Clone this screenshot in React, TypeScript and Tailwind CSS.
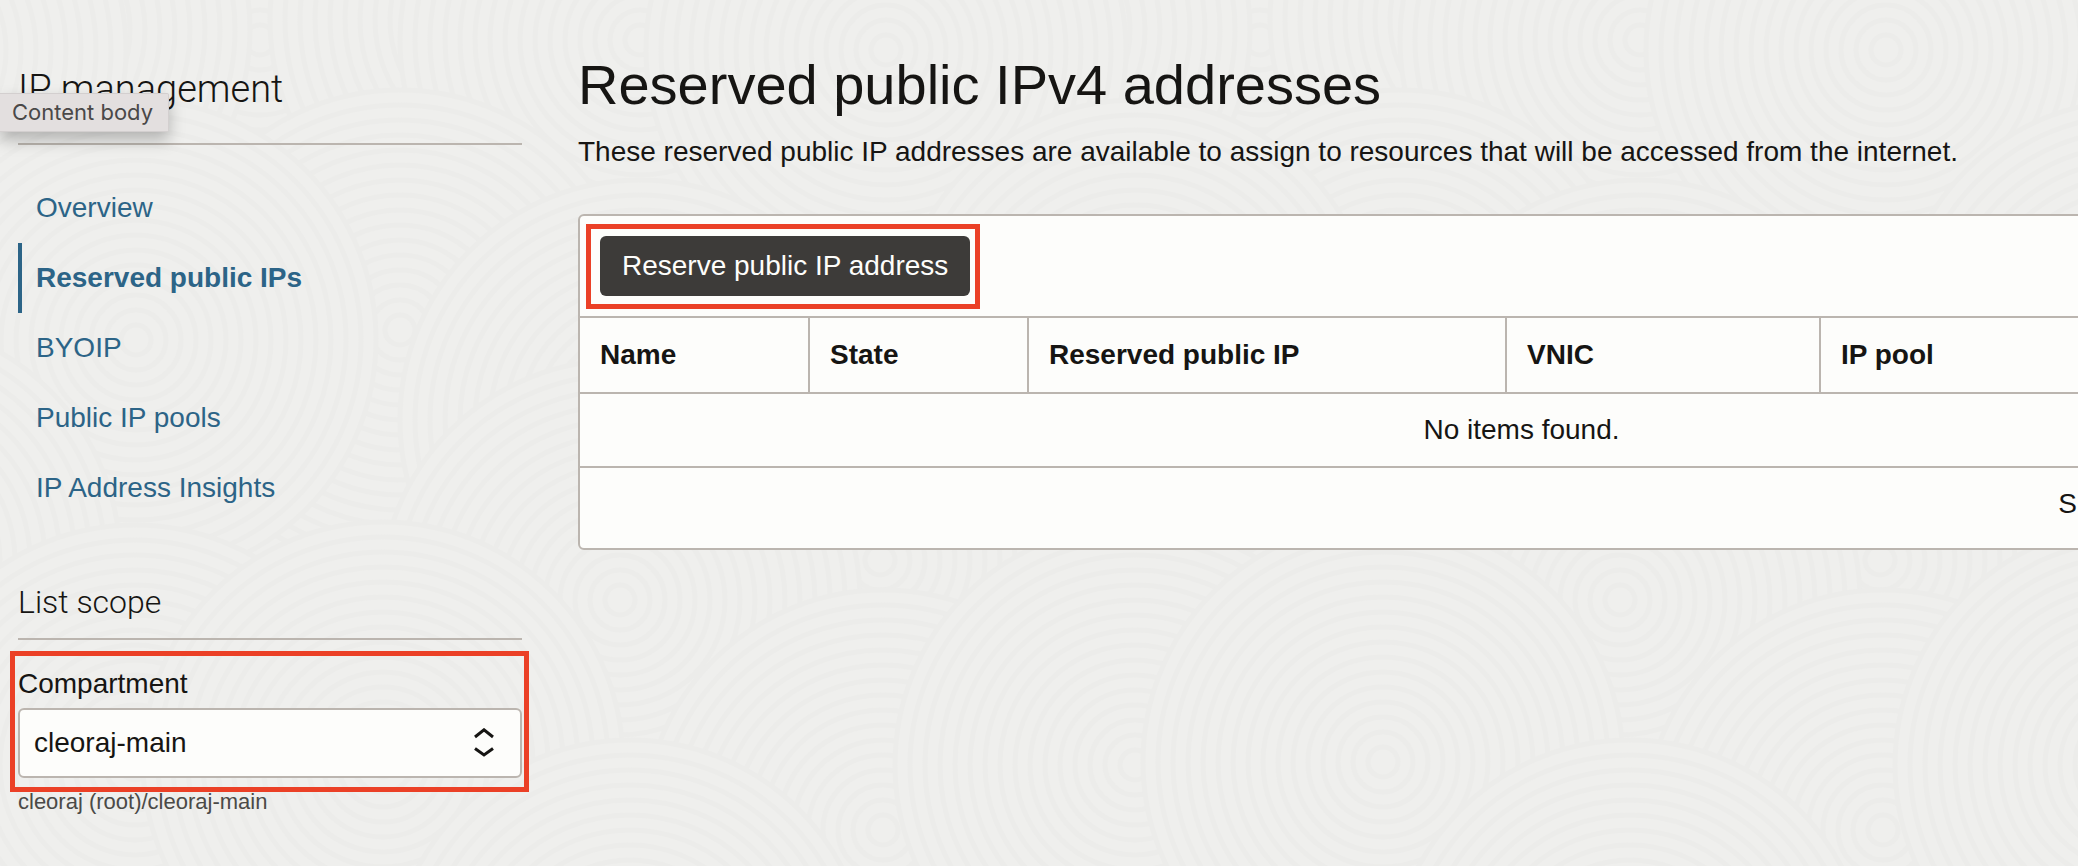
const navLinks = ["Overview", "Reserved public IPs", "BYOIP", "Public IP pools", "IP Address Insights"];
const activeLink = "Reserved public IPs";

const columns = [
  { title: "Name", width: "w-[230px]" },
  { title: "State", width: "w-[219px]" },
  { title: "Reserved public IP", width: "w-[478px]" },
  { title: "VNIC", width: "w-[314px]" },
  { title: "IP pool", width: "" },
];

// Ring centres of one 1000px wide tile, listed from back to front.
const ringCentres = [
  [260, 40], [510, 20], [10, 30], [760, 180], [640, 40], [886, 50], [400, 330], [136, 340],
  [640, 420], [880, 560], [620, 600], [883, 830], [135, 765], [383, 762], [630, 980],
];
const tileOffsets = [-1000, 0, 1000, 2000];
const radii = [240, 225, 210, 195, 180, 165, 150, 135, 120, 105, 90, 75, 60, 45, 30, 15];

function RippleBackground() {
  return (
    <svg className="pointer-events-none absolute inset-0 h-full w-full" aria-hidden="true">
      {ringCentres.map(([x, y]) =>
        tileOffsets.map((dx) => (
          <g key={`${x}-${y}-${dx}`} fill="#efefed" stroke="#ececea" strokeWidth="5">
            {radii.map((r) => (
              <circle key={r} cx={x + dx} cy={y} r={r} />
            ))}
          </g>
        )),
      )}
    </svg>
  );
}

function Sidebar() {
  return (
    <aside className="w-[504px] shrink-0 pt-[65px]">
      <h2 className="border-b-2 border-[#bbb5af] pb-[30px] font-['Roboto',sans-serif] text-[38px] leading-[48px] font-light">
        IP management
      </h2>
      <nav className="mt-7">
        <ul>
          {navLinks.map((label) => (
            <li key={label}>
              <a
                href="#"
                className={
                  label === activeLink
                    ? "flex h-[70px] items-center border-l-4 border-[#2c6487] pl-[14px] font-bold text-[#2c6487]"
                    : "flex h-[70px] items-center border-l-4 border-transparent pl-[14px] text-[#2c6487]"
                }
              >
                {label}
              </a>
            </li>
          ))}
        </ul>
      </nav>
      <h3 className="mt-[59px] border-b-2 border-[#bbb5af] pb-4 font-['Roboto',sans-serif] text-[32px] leading-[40px] font-light">
        List scope
      </h3>
      <div className="relative mt-6">
        <label htmlFor="compartment" className="block leading-[40px]">
          Compartment
        </label>
        <div className="relative mt-1">
          <select
            id="compartment"
            className="block h-[70px] w-full appearance-none rounded-md border-2 border-[#bbb5af] bg-[#fdfdfb] pr-14 pl-[14px] text-[#161513]"
          >
            <option>cleoraj-main</option>
          </select>
          <svg
            className="pointer-events-none absolute top-5 right-7 h-[30px] w-5"
            viewBox="0 0 20 30"
            fill="none"
            stroke="#161513"
            strokeWidth="3"
            aria-hidden="true"
          >
            <path d="M1 9 L10 1.8 L19 9" />
            <path d="M1 20.5 L10 27 L19 20.5" />
          </svg>
        </div>
        <div className="pointer-events-none absolute -top-[13px] -right-[7px] -bottom-[14px] -left-2 z-10 border-[5px] border-[#eb4026]" />
      </div>
      <p className="mt-2 text-[22px] leading-[32px] text-[#4b4a47]">cleoraj (root)/cleoraj-main</p>
    </aside>
  );
}

function AddressTable() {
  return (
    <div className="mt-[42px] -mr-[387px] overflow-hidden rounded-md border-2 border-[#bbb5af] bg-[#fdfdfb]">
      <div className="flex h-[100px] items-center px-5">
        <div className="relative">
          <button type="button" className="h-[60px] rounded-md bg-[#3d3b39] px-[22px] text-[#fdfdfb]">
            Reserve public IP address
          </button>
          <div className="pointer-events-none absolute -top-3 -right-[10px] -bottom-[13px] -left-[14px] border-[5px] border-[#eb4026]" />
        </div>
      </div>
      <table className="w-full table-fixed border-separate border-spacing-0">
        <thead>
          <tr>
            {columns.map(({ title, width }) => (
              <th
                key={title}
                scope="col"
                className={`${width} h-[78px] border-y-2 border-r-2 border-[#bbb5af] px-5 text-left font-bold last:border-r-0`}
              >
                {title}
              </th>
            ))}
          </tr>
        </thead>
        <tbody>
          <tr>
            <td colSpan={5} className="h-[74px] border-b-2 border-[#bbb5af] text-center">
              No items found.
            </td>
          </tr>
        </tbody>
        <tfoot>
          <tr>
            <td colSpan={5} className="pt-4 pr-[386px] pb-6 text-right leading-[40px]">
              S
            </td>
          </tr>
        </tfoot>
      </table>
    </div>
  );
}

export default function App() {
  return (
    <div className="relative min-h-screen overflow-hidden bg-[#efefed] font-['Liberation_Sans',Arial,sans-serif] text-[28px] text-[#161513]">
      <RippleBackground />
      <div className="relative flex gap-14 pl-[18px]">
        <Sidebar />
        <main className="min-w-0 flex-1 pt-[53px]">
          <h1 className="text-[56px] leading-[64px]">Reserved public IPv4 addresses</h1>
          <p className="mt-[15px] leading-[40px]">
            These reserved public IP addresses are available to assign to resources that will be accessed from the
            internet.
          </p>
          <AddressTable />
        </main>
      </div>
      <div
        role="tooltip"
        className="absolute top-[93px] left-0 z-20 rounded-r-xs border border-l-0 border-[#d3cfcf] bg-[#e3dfdf] pr-[15px] pb-px pl-3 font-['Inter',sans-serif] text-[22px] leading-[36px] text-[#4a4848] shadow-[0_8px_16px_rgba(0,0,0,0.25)]"
      >
        Content body
      </div>
    </div>
  );
}
